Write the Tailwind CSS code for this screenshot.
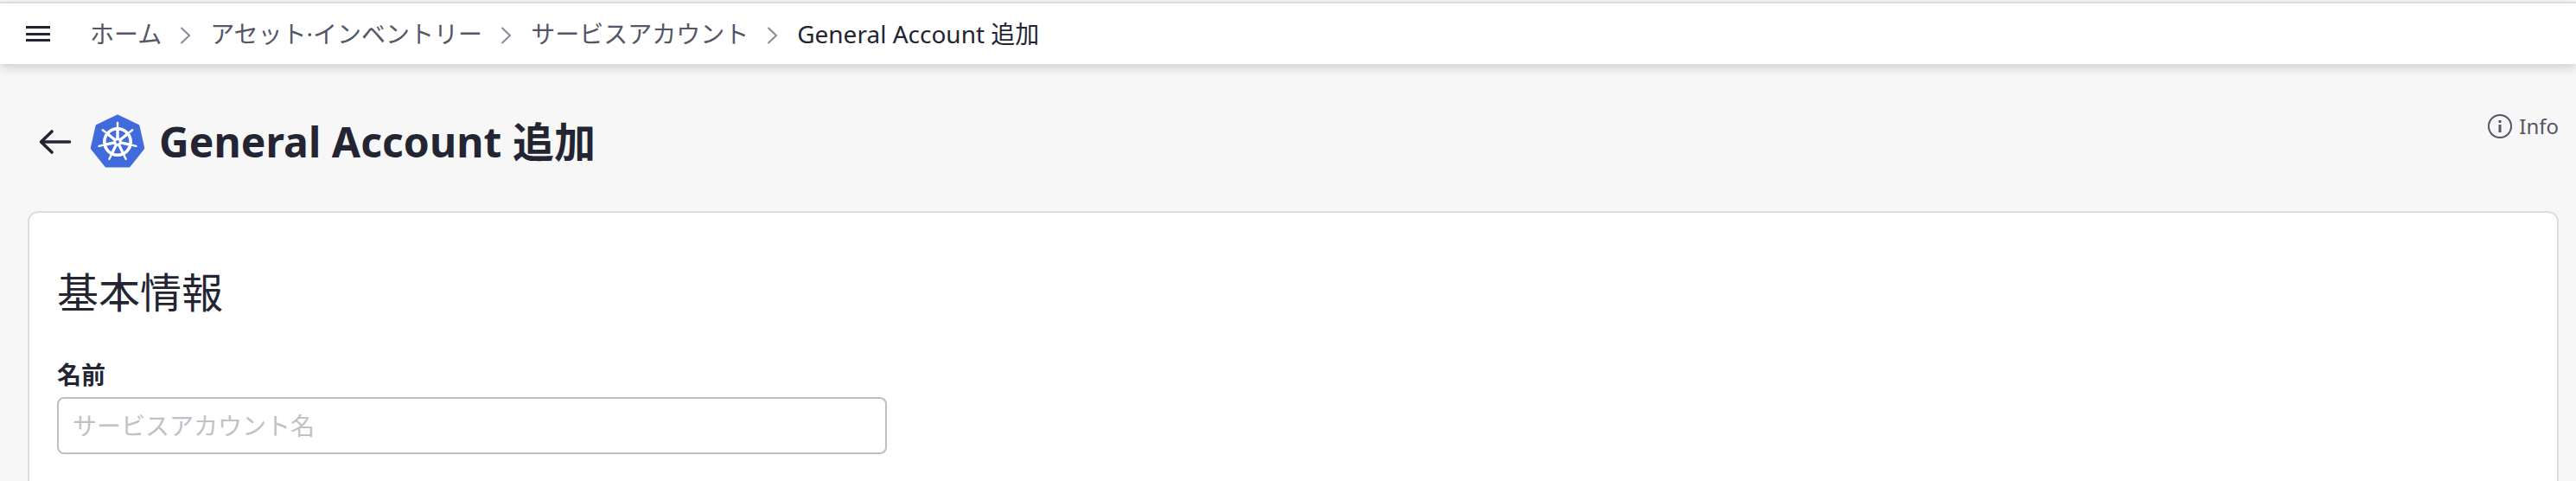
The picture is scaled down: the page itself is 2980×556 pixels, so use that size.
<!DOCTYPE html>
<html lang="ja">
<head>
<meta charset="utf-8">
<title>General Account 追加</title>
<script src="https://cdn.jsdelivr.net/npm/@tailwindcss/browser@4"></script>
</head>
<body class="h-[556px] overflow-hidden bg-[#f7f7f7] font-['Noto_Sans','Noto_Sans_CJK_JP',sans-serif] text-[#232533]">
<div class="flex h-full flex-col">
  <header class="mt-0.5 flex h-[72px] shrink-0 items-center border-t-2 border-[#dddddf] bg-white pl-[30px] shadow-[0_4px_12px_rgba(0,0,0,0.17)]">
    <button class="flex h-[18px] w-7 flex-col justify-between" aria-label="メニュー">
      <span class="h-[3px] w-full bg-[#232533]"></span>
      <span class="h-[3px] w-full bg-[#232533]"></span>
      <span class="h-[3px] w-full bg-[#232533]"></span>
    </button>
    <nav class="ml-[46px] flex items-center text-[28px] leading-[40px] whitespace-nowrap text-[#545566]">
      <a>ホーム</a>
      <svg class="mx-4 mt-1 size-6" viewBox="0 0 24 24" fill="none" stroke="#898995" stroke-width="2"><path d="M6.500 3l9.500 9-9.500 9"/></svg>
      <a>アセット·インベントリー</a>
      <svg class="mx-4 mt-1 size-6" viewBox="0 0 24 24" fill="none" stroke="#898995" stroke-width="2"><path d="M6.500 3l9.500 9-9.500 9"/></svg>
      <a>サービスアカウント</a>
      <svg class="mx-4 mt-1 size-6" viewBox="0 0 24 24" fill="none" stroke="#898995" stroke-width="2"><path d="M6.500 3l9.500 9-9.500 9"/></svg>
      <span class="text-[#232533]">General Account 追加</span>
    </nav>
  </header>
  <main class="flex grow flex-col pr-5 pl-8">
    <div class="flex h-[170px] shrink-0 items-start justify-between">
      <div class="flex items-center pt-[58px]">
        <svg class="ml-3 h-[30px] w-10" viewBox="0 0 40 30" fill="none" stroke="#232533" stroke-width="3.600" stroke-linecap="round" stroke-linejoin="round"><path d="M36.500 15H3.500M16 3L3.500 15L16 27"/></svg>
        <svg class="ml-5 size-16" viewBox="-32 -32 64 64">
          <path d="M0-29.500L23.500-18.200L29.200 7.200L13 27.500H-13L-29.200 7.200L-23.500-18.200Z" fill="#416bdd" stroke="#416bdd" stroke-width="4" stroke-linejoin="round"/>
          <g fill="none" stroke="#fff" stroke-linecap="round">
            <circle r="15.200" stroke-width="3.600"/>
            <g id="spoke"><path d="M0-3V-22" stroke-width="2.400"/><path d="M0-5V-14" stroke-width="3.200"/></g>
            <use href="#spoke" transform="rotate(51.430)"/>
            <use href="#spoke" transform="rotate(102.860)"/>
            <use href="#spoke" transform="rotate(154.290)"/>
            <use href="#spoke" transform="rotate(205.710)"/>
            <use href="#spoke" transform="rotate(257.140)"/>
            <use href="#spoke" transform="rotate(308.570)"/>
            <circle r="3.500" stroke-width="2.800"/>
          </g>
        </svg>
        <h1 class="ml-4 text-5xl leading-[64px] font-bold tracking-[0.07px] whitespace-nowrap">General Account 追加</h1>
      </div>
      <div class="flex items-center gap-2 pt-[54px] text-2xl leading-[36px] text-[#545566]">
        <svg class="size-7" viewBox="0 0 28 28" fill="none" stroke="#545566"><circle cx="14" cy="14" r="13" stroke-width="2"/><path d="M14 12v9M14 7v3" stroke-width="3"/></svg>
        <span>Info</span>
      </div>
    </div>
    <section class="grow rounded-t-xl border-2 border-b-0 border-[#dddddf] bg-white pt-[56px] pl-8">
      <h2 class="text-5xl leading-[72px]">基本情報</h2>
      <label class="mt-[39px] block text-[28px] leading-[40px] font-bold">名前</label>
      <input class="mt-[6px] block h-[66px] w-[960px] rounded-lg border-2 border-[#bfbfc5] bg-white px-4 text-[28px] placeholder:text-[#c0c0c6]" placeholder="サービスアカウント名">
    </section>
  </main>
</div>
</body>
</html>
